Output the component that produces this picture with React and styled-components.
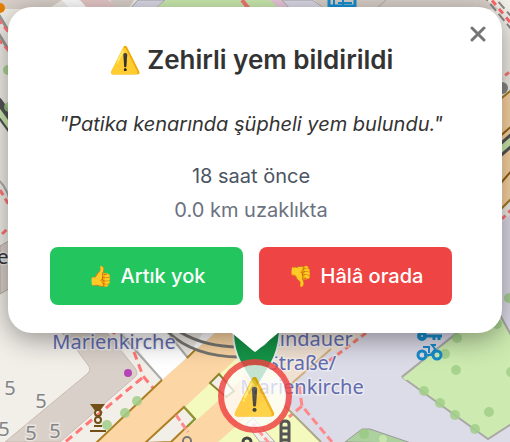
import React from "react";
import styled, { createGlobalStyle } from "styled-components";

const GlobalStyle = createGlobalStyle`
  *, *::before, *::after { box-sizing: border-box; }
  body { margin: 0; font-family: Inter, "Liberation Sans", sans-serif; }
`;

const Screen = styled.main`
  position: relative;
  display: flex;
  flex-direction: column;
  align-items: center;
  min-height: 100vh;
  padding: 7px 8px 8px;
  overflow: hidden;
  background: #f2efe9;
  isolation: isolate;
`;

const MapCanvas = styled.svg`
  position: absolute;
  inset: 0;
  z-index: -1;
  width: 100%;
  height: 100%;
`;

const MapLabel = styled.text`
  font-family: "Noto Sans", "Open Sans", sans-serif;
  font-size: 20px;
  font-weight: 400;
  fill: ${(p) => p.$color || "#626cb0"};
  stroke: #f5f3f3;
  stroke-width: 3px;
  stroke-opacity: 0.6;
  paint-order: stroke;
  text-anchor: middle;
`;

const Popup = styled.section`
  position: relative;
  width: 100%;
  padding: 36px 50px 28px 42px;
  border-radius: 24px;
  background: #fff;
  color: #333;
  text-align: center;
  box-shadow: 0 6px 28px rgba(0, 0, 0, 0.4);
`;

const CloseButton = styled.button`
  position: absolute;
  top: 13px;
  right: 10px;
  display: grid;
  place-items: center;
  width: 28px;
  height: 28px;
  padding: 0;
  border: 0;
  background: none;
  color: #757575;
  cursor: pointer;
`;

const Title = styled.h2`
  margin: 0 0 32px;
  font-size: 26px;
  line-height: 34px;
  font-weight: 600;
`;

const Quote = styled.p`
  margin: 0 0 22px;
  font-size: 20px;
  line-height: 30px;
  font-style: italic;
`;

const Detail = styled.p`
  margin: 0 0 4px;
  font-size: 20px;
  line-height: 30px;
  color: ${(p) => (p.$muted ? "#6b7280" : "#4b5563")};
`;

const Actions = styled.div`
  display: grid;
  grid-template-columns: 1fr 1fr;
  gap: 16px;
  margin-top: 22px;
`;

const VoteButton = styled.button`
  display: flex;
  align-items: center;
  justify-content: center;
  gap: 8px;
  height: 58px;
  padding: 0 8px;
  border: 0;
  border-radius: 8px;
  background: ${(p) => (p.$tone === "gone" ? "#22c55e" : "#ef4444")};
  color: #fff;
  font: 500 20px/28px Inter, "Liberation Sans", sans-serif;
  white-space: nowrap;
  cursor: pointer;
`;

const Tip = styled.div`
  position: relative;
  width: 46px;
  height: 19px;
  background: #fff;
  clip-path: polygon(0 0, 100% 0, 54% 94%, 50% 100%, 46% 94%);
`;

const AlertMarker = styled.button`
  display: flex;
  align-items: center;
  justify-content: center;
  width: 74px;
  height: 74px;
  margin-top: 7px;
  padding: 0;
  border: 6px solid #ef4444;
  border-radius: 50%;
  background: rgba(255, 255, 255, 0.9);
  font: 36px/44px Inter, "Noto Color Emoji", sans-serif;
  opacity: 0.83;
  cursor: pointer;
`;

const numbers = [[10, 395], [41, 408], [4, 436], [31, 440], [55, 438]];
const trees = [
  [107, 425], [125, 413], [137, 401], [457, 338], [445, 354], [456, 370],
  [424, 391], [440, 403], [455, 415], [475, 429], [489, 412], [511, 372],
  [497, 324], [8, 70], [9, 107], [509, 298],
];

function StreetMap() {
  return (
    <MapCanvas viewBox="0 0 510 442" preserveAspectRatio="xMidYMid slice" aria-hidden="true">
      <rect width="510" height="442" fill="#f2efe9" />

      <path d="M0 0H62L48 9H0Z" fill="#d9d0c9" />
      <path d="M62 0H78L100 9H70Z" fill="#fff" />
      <path d="M80 0H108L122 9H88Z" fill="#e7c9c9" />
      <path d="M110 0H134L128 9H117Z" fill="#d9d0c9" />
      <path d="M138 0H165L155 9H130Z" fill="#dcdbe8" stroke="#aaa" />
      <path d="M166 0H270L283 9H155Z" fill="#cdebb0" />
      <path d="M242 0l7 9" stroke="#f47777" strokeWidth="4" />
      <path d="M270 0H282L292 9H280Z" fill="#e9c9dc" />
      <path d="M282 0H312L326 9H290Z" fill="#dcdbe8" stroke="#b3a9ac" />
      <path d="M314 0H486L499 9H326Z" fill="#d9d0c9" />
      <path d="M386 0l-10 9" stroke="#b3a9a2" />
      <g fill="none" stroke="#1590d4" strokeWidth="2">
        <path d="M329 0V8M355 0V8M328 6H356" strokeWidth="3" />
        <path d="M334 0V5M338 3H352M343 0V6" />
      </g>
      <path d="M482-6L512 30M490-8L516 22" fill="none" stroke="#888" strokeWidth="2" strokeDasharray="9 4" />
      <path d="M485-8L515 28" fill="none" stroke="#f66" strokeWidth="3" strokeDasharray="6 5" />

      <circle cx="0" cy="8" r="5" fill="#e88100" />
      <path d="M-3 12L14 40M-3 31L14 59" fill="none" stroke="#999" strokeWidth="3" />
      <path d="M-2 19L11 35M-2 39L11 53" fill="none" stroke="#f77" strokeWidth="3" strokeDasharray="6 4" />
      <path d="M-5 102L18 134" fill="none" stroke="#555" strokeWidth="14" />
      <path d="M-5 106L18 138" fill="none" stroke="#cdebb0" strokeWidth="5" />
      <path d="M-4 178C5 184 9 194 11 207" fill="none" stroke="#aaa" strokeWidth="2" />
      <path d="M0 190L12 210M2 234L15 222" fill="none" stroke="#f77" strokeWidth="3" strokeDasharray="6 4" />
      <path d="M0 246L14 238V286L0 294Z" fill="#d9d0c9" stroke="#b9aaa0" />
      <MapLabel x="3" y="264" $color="#333">e</MapLabel>

      <path d="M498 101L514 88V196L498 212Z" fill="#fcd6a4" stroke="#a77b20" strokeWidth="2" />
      <path d="M498 152L514 138" stroke="#555" strokeWidth="12" />
      <path d="M498 152L514 138" stroke="#cdebb0" strokeWidth="6" />
      <path d="M498 138L514 124M500 184L514 168" stroke="#92620c" strokeWidth="2" />
      <circle cx="502" cy="88" r="6" fill="#888" />
      <path d="M498 81L512 70M502 219L512 209" stroke="#f77" strokeWidth="3" strokeDasharray="5 4" />
      <path d="M502 222L510 215V340H500Z" fill="#dcdbe8" />

      <path d="M62 333L77 350L88 365Q92 370 87 374L5 442H60L135 377Q139 373 135 368L107 333Z" fill="#d9d0c9" stroke="#c9bcb3" strokeWidth="1" />
      <path d="M125 333H215L187 357L162 380Z" fill="#fff" />
      <path d="M168 333H203L187 357Z" fill="#eee9e2" />
      <path d="M120 333L162 380M170 336L188 358" stroke="#aaa" strokeWidth="2" />
      <path d="M112 331L115 334M134 352L143 376L153 388M142 378L64 443" fill="none" stroke="#f77" strokeWidth="3" strokeDasharray="8 5" />
      <circle cx="128" cy="373" r="4" fill="#b545b5" />

      <path d="M97 442L162 380L215 333H286V348L242 355L185 407L145 442Z" fill="#fcd6a4" />
      <path d="M95 444L162 380M187 358L195 350" stroke="#ad8023" strokeWidth="2" />
      <path d="M185 407L240 355L290 366L251 394L198 421Z" fill="#f4f9bd" />
      <path d="M171 442L198 419L250 372L284 400L222 442Z" fill="#fcd6a4" />
      <path d="M218 442L284 384L287 405L321 442Z" fill="#f4f9bd" />
      <path d="M145 443L184 407L195 419L171 442Z" fill="#f2efe9" stroke="#ad8023" strokeWidth="2" />
      <path d="M184 407L195 419L188 426" fill="none" stroke="#8d9935" strokeWidth="2" />
      <path d="M176 415L188 432" stroke="#f88" strokeWidth="3" strokeDasharray="7 3" />
      <path d="M210 383L219 374L234 391L226 397Z" fill="#f2efe9" stroke="#8b852e" strokeWidth="2" />
      <path d="M246 424L253 418L275 442H260Z" fill="#f2efe9" stroke="#aaa" />
      <path d="M253 424L269 443" stroke="#f99" strokeWidth="3" strokeDasharray="6 3" />
      <g fill="none" stroke="#777671" strokeWidth="3">
        <path d="M168 332Q194 357 240 357" />
        <path d="M180 332Q205 347 240 347" />
      </g>

      <path d="M284 333H510V442H321L284 402Z" fill="#dcdbe8" />
      <path d="M276 333H364L341 349L324 354L290 384L275 373Z" fill="#efe0d1" />
      <path d="M331 349L290 385" stroke="#cfae7c" strokeWidth="2" />
      <path d="M366 333L329 361" stroke="#f47c6c" strokeWidth="3" strokeDasharray="6 4" />
      <path d="M299 386L302 406L332 442M302 406L289 417" fill="none" stroke="#f88" strokeWidth="3" strokeDasharray="8 4" />
      <path d="M285 406L321 442" stroke="#aaa68b" strokeWidth="2" />

      <path d="M402 377L500 315L515 341V421L488 439Z" fill="#cdebb0" />
      <path d="M402 377L462 329L500 315L516 344M402 377L488 439L516 421" fill="none" stroke="#aaa8a6" strokeWidth="2" />
      <path d="M402 377L462 329L500 315V380H405Z" fill="#cdebb0" />
      <path d="M402 377L462 329" stroke="#aaa8a6" strokeWidth="2" />
      <path d="M345 442L362 429H370L411 443Z" fill="#add19e" stroke="#999" />
      <circle cx="364" cy="434" r="5" fill="#9bcb86" />
      <circle cx="383" cy="439" r="4" fill="#c5e5aa" />
      <g fill="#a2cf8a" opacity="0.85">
        {trees.map(([x, y]) => <circle key={`${x}-${y}`} cx={x} cy={y} r="5" />)}
      </g>

      <g fill="none" stroke="#168bc9" strokeWidth="3">
        <circle cx="422" cy="336" r="3" strokeWidth="4" />
        <path d="M425 336H442M434 336V340M439 336V340" strokeWidth="3" />
        <circle cx="422" cy="355" r="4" />
        <circle cx="437" cy="355" r="4" />
        <path d="M424 355H431L435 349L432 345H436M423 347H429V353" strokeWidth="2" />
      </g>

      <g fill="none" stroke="#735018" strokeWidth="2">
        <path d="M92 405H103L100 409H95ZM94 426H102M90 431H106" fill="#735018" />
        <circle cx="98" cy="413" r="3" />
        <circle cx="98" cy="420" r="3" />
      </g>
      <path d="M281 442V424Q281 421 285 421T289 424V442M281 428H289M281 434H289M281 440H289" fill="none" stroke="#555" strokeWidth="3" />
      <circle cx="247" cy="442" r="4" fill="none" stroke="#444" strokeWidth="3" />
      <circle cx="187" cy="441" r="4" fill="none" stroke="#777" strokeWidth="2" />

      {numbers.map(([x, y]) => (
        <MapLabel key={x} x={x} y={y} $color="#858585">5</MapLabel>
      ))}
      <MapLabel x="114" y="349">Marienkirche</MapLabel>
      <MapLabel x="311" y="346">Lindauer</MapLabel>
      <MapLabel x="302" y="370">Straße/</MapLabel>
      <MapLabel x="302" y="394">Marienkirche</MapLabel>

      <path d="M233 325C232 352 239 362 256 389C273 362 280 352 280 325Z" fill="#149447" stroke="#eee" strokeWidth="2" />
      <circle cx="256" cy="334" r="14" fill="#d9d9d9" />
    </MapCanvas>
  );
}

export default function App() {
  return (
    <>
      <GlobalStyle />
      <Screen>
        <StreetMap />
        <Popup aria-labelledby="report-title">
          <CloseButton type="button" aria-label="Kapat">
            <svg width="16" height="16" viewBox="0 0 16 16" fill="none" stroke="currentColor" strokeWidth="3" strokeLinecap="round">
              <path d="M2 2L14 14M14 2L2 14" />
            </svg>
          </CloseButton>
          <Title id="report-title">⚠️ Zehirli yem bildirildi</Title>
          <Quote>"Patika kenarında şüpheli yem bulundu."</Quote>
          <Detail>18 saat önce</Detail>
          <Detail $muted>0.0 km uzaklıkta</Detail>
          <Actions>
            <VoteButton type="button" $tone="gone"><span>👍</span><span>Artık yok</span></VoteButton>
            <VoteButton type="button" $tone="present"><span>👎</span><span>Hâlâ orada</span></VoteButton>
          </Actions>
        </Popup>
        <Tip />
        <AlertMarker type="button" aria-label="Zehirli yem">⚠️</AlertMarker>
      </Screen>
    </>
  );
}
